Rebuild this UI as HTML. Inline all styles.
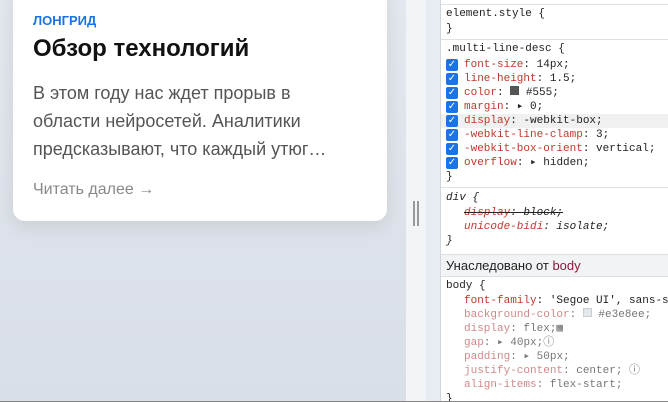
<!DOCTYPE html>
<html><head><meta charset="utf-8"><style>
*{margin:0;padding:0;box-sizing:border-box}
body{width:668px;height:402px;overflow:hidden;background:#dde2ea;position:relative;font-family:"Liberation Sans","DejaVu Sans",sans-serif}
.page{position:absolute;left:0;top:0;width:406px;height:401px;background:linear-gradient(#e3e7ee,#d9dfe7)}
.card{position:absolute;left:13px;top:-20px;width:374px;height:241px;background:#fff;border-radius:12px;box-shadow:0 6px 18px rgba(0,0,0,.09)}
.tag{position:absolute;left:20px;top:33px;font-size:13px;font-weight:bold;color:#1a73e8}
.title{position:absolute;left:20px;top:55px;font-size:24px;font-weight:bold;color:#111}
.desc{position:absolute;left:20px;top:99px;white-space:nowrap;font-size:18px;line-height:28px;color:#555}
.more{position:absolute;left:20px;top:201px;font-size:16px;color:#888}
.split{position:absolute;left:406px;top:0;width:20px;height:401px;background:#f2f4f7}
.split2{position:absolute;left:426px;top:0;width:14px;height:401px;background:#e7ecf3}
.h{position:absolute;left:413px;top:201px;width:6px;height:25px;border-left:2px solid #999;border-right:2px solid #999}
.dev{position:absolute;left:440px;top:0;width:228px;height:401px;background:#fff;border-left:1px solid #d0d6de;font-family:"Liberation Mono","DejaVu Sans Mono",monospace;font-size:11px;color:#222;overflow:hidden}
.l{position:absolute;left:5px;white-space:pre;line-height:14px}
.p{left:23px}
.n{color:#c0392b}.f{color:#d08a8a}
.cb{position:absolute;left:5px;width:12px;height:12px;background:#1a73e8;border-radius:2px;color:#fff;font-size:10px;line-height:12px;text-align:center;font-family:"DejaVu Sans",sans-serif}
.sep{position:absolute;left:0;width:228px;border-top:1px solid #dde1e6}
.hdr{position:absolute;left:0;top:254px;width:228px;height:23px;background:#f1f3f5;border-top:1px solid #dde1e6;border-bottom:1px solid #dde1e6;font-family:"Liberation Sans",sans-serif;font-size:13px;line-height:22px;padding-left:5px}
.bot{position:absolute;left:0;top:401px;width:668px;height:1px;background:#888}
i{font-style:italic}
</style></head><body>
<div class="page"></div>
<div class="card">
<div class="tag">ЛОНГРИД</div>
<div class="title">Обзор технологий</div>
<div class="desc">В этом году нас ждет прорыв в<br>области нейросетей. Аналитики<br>предсказывают, что каждый утюг…</div>
<div class="more">Читать далее →</div>
</div>
<div class="split"></div><div class="split2"></div><div class="h"></div>
<div class="dev">
<div class="sep" style="top:4px"></div>
<div class="l" style="top:7px">element.style {</div>
<div class="l" style="top:22px">}</div>
<div class="sep" style="top:39px"></div>
<div class="l" style="top:42px">.multi-line-desc {</div>
<div class="cb" style="top:59px">✓</div><div class="l p" style="top:58px"><span class="n">font-size</span>: 14px;</div>
<div class="cb" style="top:73px">✓</div><div class="l p" style="top:72px"><span class="n">line-height</span>: 1.5;</div>
<div class="cb" style="top:87px">✓</div><div class="l p" style="top:86px"><span class="n">color</span>: <span style="display:inline-block;width:9px;height:9px;background:#555"></span> #555;</div>
<div class="cb" style="top:101px">✓</div><div class="l p" style="top:100px"><span class="n">margin</span>: ▸ 0;</div>
<div style="position:absolute;left:0;top:114px;width:228px;height:14px;background:#f0f0f0"></div>
<div class="cb" style="top:115px">✓</div><div class="l p" style="top:114px"><span class="n">display</span>: -webkit-box;</div>
<div class="cb" style="top:129px">✓</div><div class="l p" style="top:128px"><span class="n">-webkit-line-clamp</span>: 3;</div>
<div class="cb" style="top:143px">✓</div><div class="l p" style="top:142px"><span class="n">-webkit-box-orient</span>: vertical;</div>
<div class="cb" style="top:157px">✓</div><div class="l p" style="top:156px"><span class="n">overflow</span>: ▸ hidden;</div>
<div class="l" style="top:170px">}</div>
<div class="sep" style="top:187px"></div>
<div class="l" style="top:191px"><i>div {</i></div>
<div class="l p" style="top:206px"><i><s><span class="n">display</span>: block;</s></i></div>
<div class="l p" style="top:220px"><i><span class="n">unicode-bidi</span>: isolate;</i></div>
<div class="l" style="top:234px"><i>}</i></div>
<div class="hdr">Унаследовано от <span style="color:#8b1a3a">body</span></div>
<div class="l" style="top:279px">body {</div>
<div class="l p" style="top:294px"><span class="n">font-family</span>: 'Segoe UI', sans-serif;</div>
<div class="l p" style="top:308px;color:#777"><span class="f">background-color</span>: <span style="display:inline-block;width:9px;height:9px;background:#e3e8ee;border:1px solid #ccc"></span> #e3e8ee;</div>
<div class="l p" style="top:322px;color:#777"><span class="f">display</span>: flex;▦</div>
<div class="l p" style="top:336px;color:#777"><span class="f">gap</span>: ▸ 40px;ⓘ</div>
<div class="l p" style="top:350px;color:#777"><span class="f">padding</span>: ▸ 50px;</div>
<div class="l p" style="top:364px;color:#777"><span class="f">justify-content</span>: center; ⓘ</div>
<div class="l p" style="top:378px;color:#777"><span class="f">align-items</span>: flex-start;</div>
<div class="l" style="top:392px">}</div>
</div>
<div class="bot"></div>
</body></html>
